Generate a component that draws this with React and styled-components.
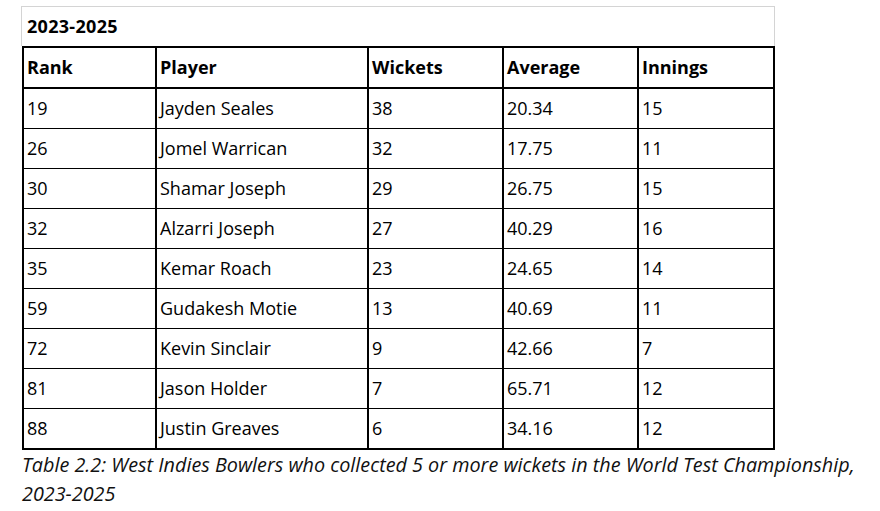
import React from "react";
import styled, { createGlobalStyle } from "styled-components";

const Global = createGlobalStyle`
  html, body { margin: 0; padding: 0; background: #ffffff; }
  body { font-family: "Open Sans", "Lato", sans-serif; color: #000; }
`;

const Page = styled.div`
  width: 880px;
  height: 511px;
  box-sizing: border-box;
  padding: 6px 0 0 21px;
  overflow: hidden;
`;

const TitleBox = styled.div`
  width: 754px;
  height: 40px;
  box-sizing: border-box;
  border: 1px solid #d4d4d4;
  border-bottom: none;
  padding: 8px 0 0 5px;
  font-weight: 700;
  font-size: 18px;
  line-height: 22px;
  letter-spacing: 0.3px;
`;

const Grid = styled.div`
  margin-left: 1px;
  width: 753px;
  box-sizing: border-box;
  display: grid;
  grid-template-columns: 133px 212px 135px 135px 134px;
  border: 2px solid #000;
`;

const Cell = styled.div`
  box-sizing: content-box;
  padding: 0 0 0 3px;
  display: flex;
  align-items: flex-start;
  padding-top: 8px;
  height: 31px;
  border-right: ${(p) => (p.$last ? "none" : "2px solid #000")};
  border-bottom: ${(p) =>
    p.$head ? "2px solid #000" : p.$final ? "none" : "1px solid #000"};
  font-size: 18px;
  line-height: 22px;
  font-weight: ${(p) => (p.$head ? 700 : 400)};
  white-space: nowrap;
`;

const Caption = styled.p`
  margin: 0 0 0 1px;
  font-style: italic;
  font-size: 19.8px;
  line-height: 29px;
  color: #111;
`;

const headers = ["Rank", "Player", "Wickets", "Average", "Innings"];
const rows = [
  ["19", "Jayden Seales", "38", "20.34", "15"],
  ["26", "Jomel Warrican", "32", "17.75", "11"],
  ["30", "Shamar Joseph", "29", "26.75", "15"],
  ["32", "Alzarri Joseph", "27", "40.29", "16"],
  ["35", "Kemar Roach", "23", "24.65", "14"],
  ["59", "Gudakesh Motie", "13", "40.69", "11"],
  ["72", "Kevin Sinclair", "9", "42.66", "7"],
  ["81", "Jason Holder", "7", "65.71", "12"],
  ["88", "Justin Greaves", "6", "34.16", "12"],
];

export default function App() {
  return (
    <Page>
      <Global />
      <TitleBox>2023-2025</TitleBox>
      <Grid>
        {headers.map((h, i) => (
          <Cell key={h} $head $last={i === headers.length - 1}>
            {h}
          </Cell>
        ))}
        {rows.map((r, ri) =>
          r.map((v, ci) => (
            <Cell
              key={ri + "-" + ci}
              $last={ci === r.length - 1}
              $final={ri === rows.length - 1}
            >
              {v}
            </Cell>
          ))
        )}
      </Grid>
      <Caption>
        Table 2.2: West Indies Bowlers who collected 5 or more wickets in the World Test Championship,
        <br />
        2023-2025
      </Caption>
    </Page>
  );
}
